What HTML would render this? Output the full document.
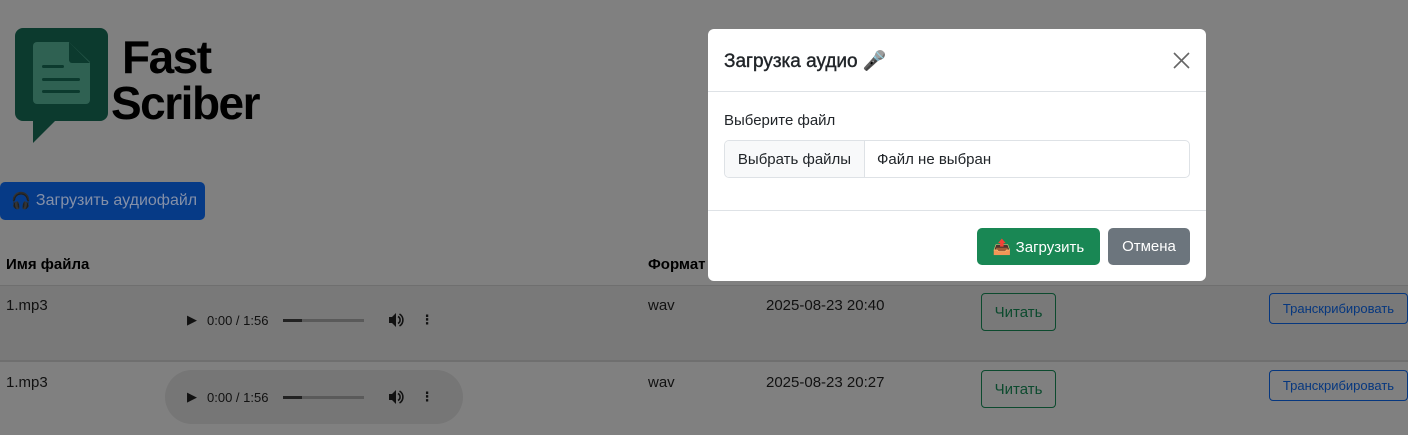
<!DOCTYPE html>
<html><head><meta charset="utf-8"><style>
*{box-sizing:border-box;margin:0;padding:0}
body{width:1408px;height:435px;overflow:hidden;background:#808080;font-family:"Liberation Sans","DejaVu Sans",sans-serif;position:relative;color:#000}
.abs{position:absolute}
.t{font-size:15px;color:#111}
.row1{left:0;top:285px;width:1408px;height:76px;background:#797979;border-top:1px solid #6f6f6f;border-bottom:1px solid #6f6f6f}
.audio{width:298px;height:54px;border-radius:27px;display:flex;align-items:center;padding-left:22px;font-size:13px;color:#111}
.btn-g{border:1px solid #0c4a2e;color:#0c4a2e;border-radius:4px;font-size:15px;display:flex;align-items:center;justify-content:center}
.btn-b{border:1px solid #06377f;color:#06377f;border-radius:4px;font-size:13px;display:flex;align-items:center;justify-content:center}
</style></head><body>
<svg class="abs" style="left:15px;top:28px" width="95" height="116" viewBox="0 0 95 116">
<path d="M8 0H85a8 8 0 0 1 8 8V85a8 8 0 0 1-8 8H40L18 115V93H8a8 8 0 0 1-8-8V8a8 8 0 0 1 8-8z" fill="#0c3a2e"/>
<path d="M22 14H54L75 34V72a4 4 0 0 1-4 4H22a4 4 0 0 1-4-4V18a4 4 0 0 1 4-4z" fill="#2f6152"/>
<path d="M54 14V32a3 3 0 0 0 3 3H75z" fill="#0c3a2e"/>
<rect x="27" y="37" width="22" height="3" rx="1.5" fill="#0c3a2e"/>
<rect x="27" y="50" width="38" height="3" rx="1.5" fill="#0c3a2e"/>
<rect x="27" y="62" width="38" height="3" rx="1.5" fill="#0c3a2e"/>
</svg>
<div class="abs" style="left:122px;top:34px;font-size:46px;font-weight:bold;line-height:46px;letter-spacing:-1.5px;color:#000">Fast</div>
<div class="abs" style="left:111px;top:80px;font-size:46px;font-weight:bold;line-height:46px;letter-spacing:-1.5px;color:#000">Scriber</div>
<div class="abs" style="left:0;top:182px;width:205px;height:38px;background:#063a86;border-radius:5px;color:#8590a8;font-size:16px;display:flex;align-items:center;padding-left:11px"><span style="filter:brightness(.45);margin-right:5px">🎧</span>Загрузить аудиофайл</div>
<div class="abs" style="left:6px;top:256px;font-size:15px;font-weight:bold">Имя файла</div>
<div class="abs" style="left:648px;top:256px;font-size:15px;font-weight:bold">Формат</div>
<div class="abs row1"></div>
<div class="abs" style="left:0;top:361px;width:1408px;height:1px;background:#6f6f6f"></div>
<div class="abs t" style="left:6px;top:297px">1.mp3</div>
<div class="abs t" style="left:6px;top:374px">1.mp3</div>
<div class="abs t" style="left:648px;top:297px">wav</div>
<div class="abs t" style="left:648px;top:374px">wav</div>
<div class="abs t" style="left:766px;top:297px">2025-08-23 20:40</div>
<div class="abs t" style="left:766px;top:374px">2025-08-23 20:27</div>
<div class="abs audio" style="left:165px;top:293px"><span>▶</span><span style="margin-left:10px">0:00 / 1:56</span><span style="margin-left:15px;width:81px;height:3px;background:#5a5a5a;position:relative"><span style="position:absolute;left:0;top:0;width:19px;height:3px;background:#222"></span></span><svg style="margin-left:24px" width="16" height="16" viewBox="0 0 16 16"><path d="M1 5H4L8 1V15L4 11H1z" fill="#111"/><path d="M10 4.5a4 4 0 0 1 0 7M11.5 2a7 7 0 0 1 0 12" stroke="#111" stroke-width="1.6" fill="none"/></svg><span style="margin-left:16px;font-weight:bold">⋮</span></div>
<div class="abs audio" style="left:165px;top:370px;background:#767676"><span>▶</span><span style="margin-left:10px">0:00 / 1:56</span><span style="margin-left:15px;width:81px;height:3px;background:#5a5a5a;position:relative"><span style="position:absolute;left:0;top:0;width:19px;height:3px;background:#222"></span></span><svg style="margin-left:24px" width="16" height="16" viewBox="0 0 16 16"><path d="M1 5H4L8 1V15L4 11H1z" fill="#111"/><path d="M10 4.5a4 4 0 0 1 0 7M11.5 2a7 7 0 0 1 0 12" stroke="#111" stroke-width="1.6" fill="none"/></svg><span style="margin-left:16px;font-weight:bold">⋮</span></div>
<div class="abs btn-g" style="left:981px;top:293px;width:75px;height:38px">Читать</div>
<div class="abs btn-g" style="left:981px;top:370px;width:75px;height:38px">Читать</div>
<div class="abs btn-b" style="left:1269px;top:293px;width:139px;height:31px">Транскрибировать</div>
<div class="abs btn-b" style="left:1269px;top:370px;width:139px;height:31px">Транскрибировать</div>
<div class="abs" style="left:708px;top:29px;width:498px;height:252px;background:#fff;border-radius:6px;overflow:hidden">
  <div class="abs" style="left:16px;top:20px;font-size:19px;color:#212529;-webkit-text-stroke:0.4px #212529">Загрузка аудио 🎤</div>
  <svg class="abs" style="left:465px;top:23px" width="17" height="17" viewBox="0 0 17 17"><path d="M1 1L16 16M16 1L1 16" stroke="#666" stroke-width="1.6"/></svg>
  <div class="abs" style="left:0;top:62px;width:498px;height:1px;background:#dee2e6"></div>
  <div class="abs" style="left:16px;top:83px;font-size:15px;color:#212529">Выберите файл</div>
  <div class="abs" style="left:16px;top:111px;width:466px;height:38px;border:1px solid #dee2e6;border-radius:5px;display:flex;font-size:15px;color:#212529;overflow:hidden">
    <div style="width:140px;background:#f8f9fa;border-right:1px solid #dee2e6;display:flex;align-items:center;justify-content:center">Выбрать файлы</div>
    <div style="padding-left:12px;display:flex;align-items:center">Файл не выбран</div>
  </div>
  <div class="abs" style="left:0;top:181px;width:498px;height:1px;background:#dee2e6"></div>
  <div class="abs" style="left:269px;top:199px;width:123px;height:37px;background:#198754;border-radius:5px;color:#fff;font-size:15px;display:flex;align-items:center;justify-content:center">📤 Загрузить</div>
  <div class="abs" style="left:400px;top:199px;width:82px;height:37px;background:#6c757d;border-radius:5px;color:#fff;font-size:15px;display:flex;align-items:center;justify-content:center">Отмена</div>
</div>
</body></html>
